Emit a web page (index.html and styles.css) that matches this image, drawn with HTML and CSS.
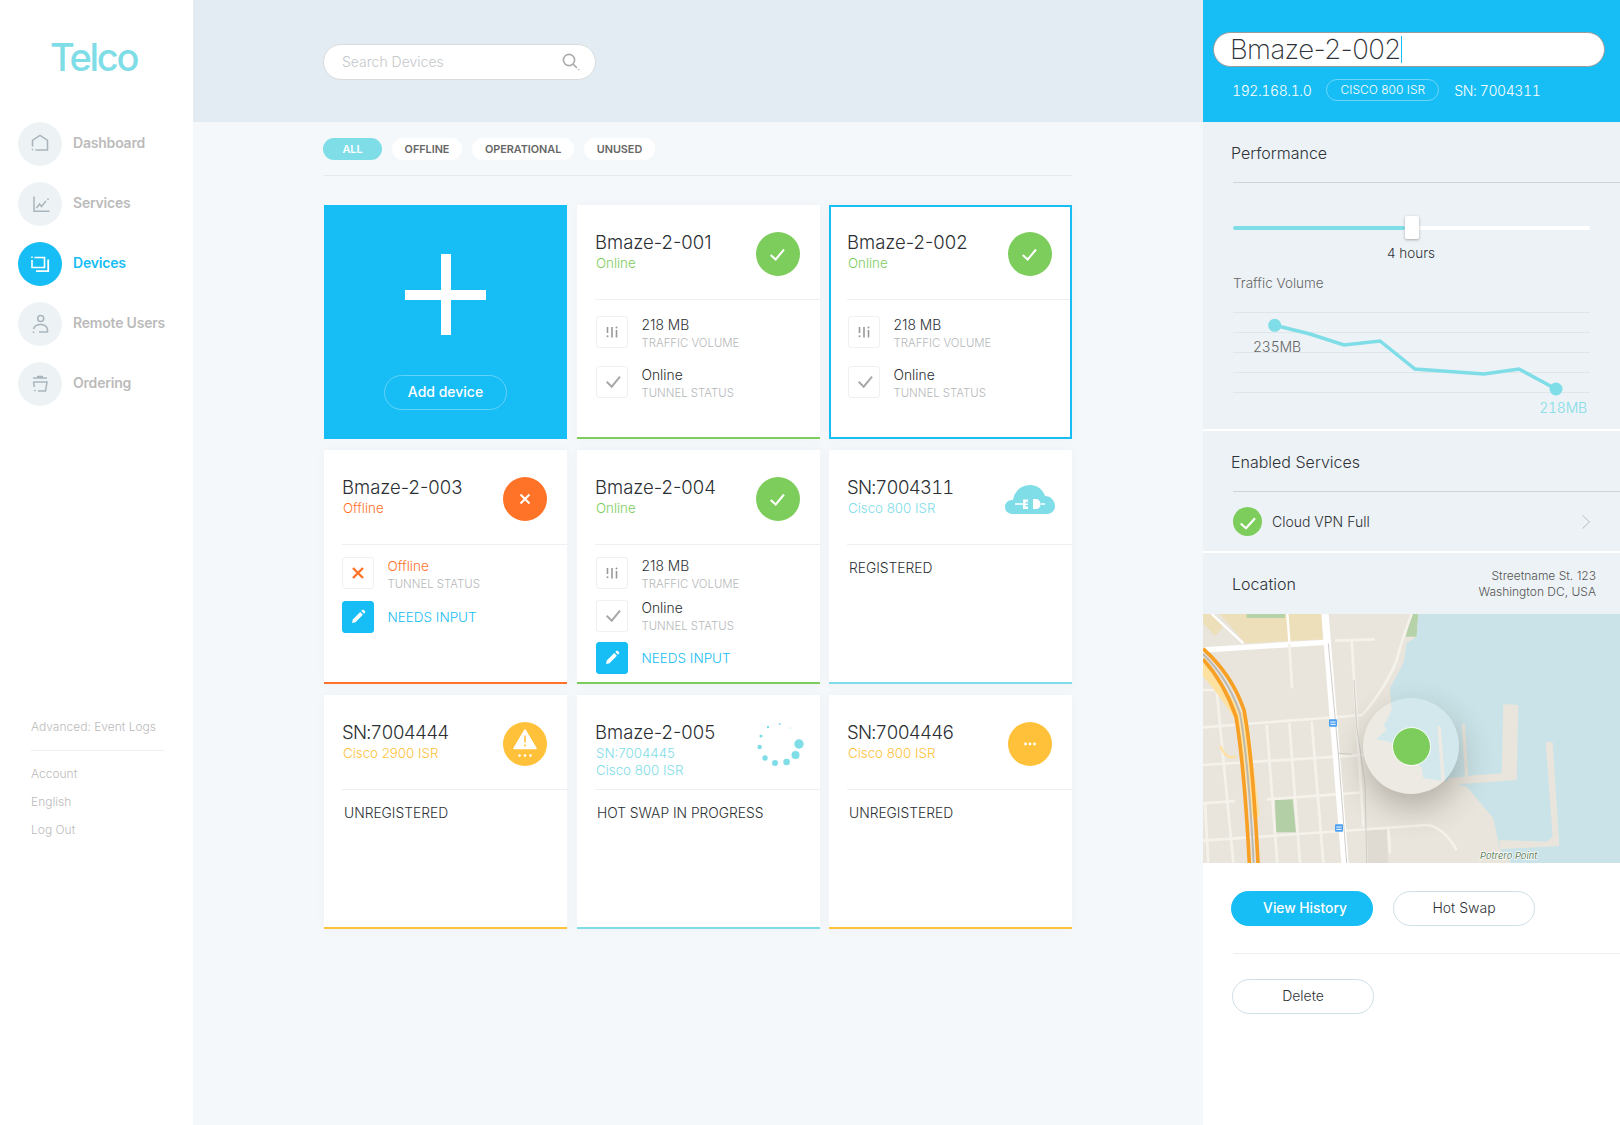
FILE: index.html
```html
<!DOCTYPE html>
<html lang="en">
<head>
<meta charset="utf-8">
<title>Telco Devices</title>
<link rel="stylesheet" href="styles.css">
</head>
<body>
<svg class="sprite" aria-hidden="true">
  <defs>
    <symbol id="i-check" viewBox="0 0 44 44"><path d="M14.700 23L19.700 27.500L28 17.500" fill="none" stroke="#fff" stroke-width="2"/></symbol>
    <symbol id="i-x" viewBox="0 0 44 44"><path d="M17.500 17.500L26.500 26.500M26.500 17.500L17.500 26.500" fill="none" stroke="#fff" stroke-width="2"/></symbol>
    <symbol id="i-bars" viewBox="0 0 32 32"><path d="M11.500 11v6M16 11v10.500M20.500 14v7.500" fill="none" stroke="#999" stroke-width="1.600"/><circle cx="11.500" cy="20.300" r="1" fill="#999"/><circle cx="20.500" cy="11.500" r="1" fill="#999"/></symbol>
    <symbol id="i-tick" viewBox="0 0 32 32"><path d="M10.700 15.700L15.700 20.700L24 10.700" fill="none" stroke="#a8a8a8" stroke-width="2"/></symbol>
    <symbol id="i-cross" viewBox="0 0 32 32"><path d="M11 11L21 21M21 11L11 21" fill="none" stroke="#ff7328" stroke-width="2.400"/></symbol>
    <symbol id="i-pencil" viewBox="0 0 32 32"><path d="M10 22L10.800 18.500L18.200 11.100L20.900 13.800L13.500 21.200Z" fill="#fff"/><path d="M19.300 10L20.200 9.100C20.700 8.600 21.400 8.600 21.900 9.100L22.900 10.100C23.400 10.600 23.400 11.300 22.900 11.800L22 12.700Z" fill="#fff"/></symbol>
  </defs>
</svg>
<div class="app">
  <aside class="sidebar">
    <div class="logo">Telco</div>
    <nav class="nav">
      <a class="nav-item"><span class="nav-icon"><svg width="20" height="20" viewBox="0 0 20 20" fill="none" stroke="#a9b5bd" stroke-width="1.500"><path d="M2.500 12.500V6.500L10 1.500L17.500 6.500V16H5.500"/><path d="M2.500 14.800V16.300"/></svg></span><span class="nav-text">Dashboard</span></a>
      <a class="nav-item"><span class="nav-icon"><svg width="20" height="20" viewBox="0 0 20 20" fill="none" stroke="#a9b5bd" stroke-width="1.500"><path d="M4 2.500V17.200H19.500"/><path d="M6.500 14L9.500 10L11.500 12.500L16 7"/><path d="M18 4.500V6"/></svg></span><span class="nav-text">Services</span></a>
      <a class="nav-item nav-item-active"><span class="nav-icon"><svg width="20" height="20" viewBox="0 0 20 20" fill="none" stroke="#fff" stroke-width="1.600"><path d="M4.500 3.500H14.500V13.500H2V6"/><path d="M2 2.500V4"/><path d="M6 17.200H18.200V5.500" stroke-width="1.800"/></svg></span><span class="nav-text">Devices</span></a>
      <a class="nav-item"><span class="nav-icon"><svg width="20" height="20" viewBox="0 0 20 20" fill="none" stroke="#a9b5bd" stroke-width="1.500"><circle cx="10.700" cy="4.500" r="3"/><path d="M3.500 15C4.500 12 7.500 10.500 10.500 10.500S16.500 12 17.500 15V18H9"/><path d="M3.500 17.500V19"/></svg></span><span class="nav-text">Remote Users</span></a>
      <a class="nav-item"><span class="nav-icon"><svg width="20" height="20" viewBox="0 0 20 20" fill="none" stroke="#a9b5bd" stroke-width="1.500"><path d="M3 4H17M7 2.500H13"/><path d="M3.500 8H17L15.500 17H8"/><path d="M3.500 8L4.300 13"/><path d="M5 15.800V17.300"/></svg></span><span class="nav-text">Ordering</span></a>
    </nav>
    <div class="side-foot">
      <div class="side-link side-adv">Advanced: Event Logs</div>
      <div class="side-link">Account</div>
      <div class="side-link">English</div>
      <div class="side-link">Log Out</div>
    </div>
  </aside>

  <main class="main">
    <header class="topbar">
      <div class="search">
        <span class="search-text">Search Devices</span>
        <svg width="18" height="18" viewBox="0 0 18 18" fill="none" stroke="#aaa" stroke-width="1.600"><circle cx="7" cy="7" r="5.600"/><path d="M11.200 11.200L15 15"/><path d="M16.300 16.300L17 17"/></svg>
      </div>
    </header>
    <section class="content">
      <div class="filters">
        <span class="pill pill-on">ALL</span>
        <span class="pill">OFFLINE</span>
        <span class="pill">OPERATIONAL</span>
        <span class="pill">UNUSED</span>
      </div>
      <div class="grid">
        <div class="add-card">
          <div class="plus"></div>
          <div class="add-btn">Add device</div>
        </div>

        <article class="card card-green">
          <div class="card-head">
            <div class="head-text"><div class="title">Bmaze-2-001</div><div class="sub c-green">Online</div></div>
            <div class="status bg-green"><svg width="44" height="44"><use href="#i-check"/></svg></div>
          </div>
          <div class="rows">
            <div class="row"><div class="box"><svg width="32" height="32"><use href="#i-bars"/></svg></div><div><div class="val">218 MB</div><div class="lab">TRAFFIC VOLUME</div></div></div>
            <div class="row"><div class="box"><svg width="32" height="32"><use href="#i-tick"/></svg></div><div><div class="val">Online</div><div class="lab">TUNNEL STATUS</div></div></div>
          </div>
        </article>

        <article class="card card-green card-selected">
          <div class="card-head">
            <div class="head-text"><div class="title">Bmaze-2-002</div><div class="sub c-green">Online</div></div>
            <div class="status bg-green"><svg width="44" height="44"><use href="#i-check"/></svg></div>
          </div>
          <div class="rows">
            <div class="row"><div class="box"><svg width="32" height="32"><use href="#i-bars"/></svg></div><div><div class="val">218 MB</div><div class="lab">TRAFFIC VOLUME</div></div></div>
            <div class="row"><div class="box"><svg width="32" height="32"><use href="#i-tick"/></svg></div><div><div class="val">Online</div><div class="lab">TUNNEL STATUS</div></div></div>
          </div>
        </article>

        <article class="card card-orange">
          <div class="card-head">
            <div class="head-text"><div class="title">Bmaze-2-003</div><div class="sub c-orange">Offline</div></div>
            <div class="status bg-orange"><svg width="44" height="44"><use href="#i-x"/></svg></div>
          </div>
          <div class="rows rows-b">
            <div class="row"><div class="box"><svg width="32" height="32"><use href="#i-cross"/></svg></div><div><div class="val val-orange">Offline</div><div class="lab">TUNNEL STATUS</div></div></div>
            <div class="row"><div class="box box-blue"><svg width="32" height="32"><use href="#i-pencil"/></svg></div><div class="needs">NEEDS INPUT</div></div>
          </div>
        </article>

        <article class="card card-green">
          <div class="card-head">
            <div class="head-text"><div class="title">Bmaze-2-004</div><div class="sub c-green">Online</div></div>
            <div class="status bg-green"><svg width="44" height="44"><use href="#i-check"/></svg></div>
          </div>
          <div class="rows rows-c">
            <div class="row"><div class="box"><svg width="32" height="32"><use href="#i-bars"/></svg></div><div><div class="val">218 MB</div><div class="lab">TRAFFIC VOLUME</div></div></div>
            <div class="row"><div class="box"><svg width="32" height="32"><use href="#i-tick"/></svg></div><div><div class="val">Online</div><div class="lab">TUNNEL STATUS</div></div></div>
            <div class="row"><div class="box box-blue"><svg width="32" height="32"><use href="#i-pencil"/></svg></div><div class="needs">NEEDS INPUT</div></div>
          </div>
        </article>

        <article class="card card-teal">
          <div class="card-head">
            <div class="head-text"><div class="title title-sn">SN:7004311</div><div class="sub c-teal">Cisco 800 ISR</div></div>
            <div class="status">
              <svg width="50" height="29" viewBox="0 0 50 29"><path d="M8 29C3 29 0 26 0 22C0 17.500 3.500 14.500 8 15C9 7 16 0 25 0C33 0 38 5 40 11C46 11 50 16 50 21C50 26 46 29 42 29Z" fill="#7fdde8"/><g fill="#fff"><path d="M10 19H19M40 19H36" stroke="#fff" stroke-width="1.500"/><path d="M18 14.500H23V17H20.500V18.500H23V20H20.500V21.500H23V24H18Z"/><path d="M28 14H31C33.500 14 35.500 16 35.500 19S33.500 24 31 24H28Z"/></g></svg>
            </div>
          </div>
          <div class="state">REGISTERED</div>
        </article>

        <article class="card card-amber">
          <div class="card-head">
            <div class="head-text"><div class="title title-sn">SN:7004444</div><div class="sub c-amber">Cisco 2900 ISR</div></div>
            <div class="status bg-amber"><svg width="44" height="44" viewBox="0 0 44 44"><path d="M22 8L33 26.500H11Z" fill="#fff" stroke="#fff" stroke-width="1.500" stroke-linejoin="round"/><path d="M22 13.500V20.500M22 22.500V24.500" stroke="#ffc13a" stroke-width="1.600"/><circle cx="16.500" cy="33.500" r="1.300" fill="#fff"/><circle cx="22" cy="33.500" r="1.300" fill="#fff"/><circle cx="27.500" cy="33.500" r="1.300" fill="#fff"/></svg></div>
          </div>
          <div class="state">UNREGISTERED</div>
        </article>

        <article class="card card-teal">
          <div class="card-head">
            <div class="head-text"><div class="title">Bmaze-2-005</div><div class="sub sub-tight c-teal">SN:7004445<br>Cisco 800 ISR</div></div>
            <div class="status status-spin"><svg width="48" height="44" viewBox="0 0 48 44" fill="#7fdde8"><circle cx="43" cy="22" r="4.700"/><circle cx="39.500" cy="33" r="4"/><circle cx="30.600" cy="40" r="3.300"/><circle cx="19" cy="41" r="3"/><circle cx="9" cy="36" r="2.700"/><circle cx="3.600" cy="25" r="2.200"/><circle cx="5" cy="14" r="1.600"/><circle cx="12" cy="5" r="1.200"/><circle cx="23.700" cy="2" r="1"/><circle cx="34.500" cy="6" r=".6"/></svg></div>
          </div>
          <div class="state">HOT SWAP IN PROGRESS</div>
        </article>

        <article class="card card-amber">
          <div class="card-head">
            <div class="head-text"><div class="title title-sn">SN:7004446</div><div class="sub c-amber">Cisco 800 ISR</div></div>
            <div class="status bg-amber"><svg width="44" height="44" viewBox="0 0 44 44" fill="#fff"><circle cx="17.500" cy="22" r="1.400"/><circle cx="22" cy="22" r="1.400"/><circle cx="26.500" cy="22" r="1.400"/></svg></div>
          </div>
          <div class="state">UNREGISTERED</div>
        </article>
      </div>
    </section>
  </main>

  <aside class="detail">
    <header class="detail-top">
      <div class="name-input"><span class="name-text">Bmaze-2-002</span></div>
      <div class="meta">
        <span class="meta-num">192.168.1.0</span>
        <span class="meta-pill">CISCO 800 ISR</span>
        <span class="meta-num">SN: 7004311</span>
      </div>
    </header>

    <section class="panel panel-perf">
      <div class="panel-head"><h2 class="panel-title">Performance</h2></div>
      <div class="slider">
        <div class="track"><div class="track-fill"></div></div>
        <div class="thumb"></div>
      </div>
      <div class="slider-label">4 hours</div>
      <div class="traffic-label">Traffic Volume</div>
      <svg class="chart" width="357" height="129" viewBox="0 0 357 129">
        <g stroke="#dfe6ea" stroke-width="1"><path d="M0 12.500H357M0 32.500H357M0 52.500H357M0 72.500H357M0 92.500H357"/></g>
        <polyline points="41.700,25.300 77,34 111,45 147,41 182,69 251,74 286,69 323,89" fill="none" stroke="#7fdde8" stroke-width="3.500"/>
        <circle cx="41.700" cy="25.300" r="6.500" fill="#7fdde8"/>
        <circle cx="323" cy="89" r="6.500" fill="#7fdde8"/>
        <text class="chart-text" x="20" y="52" fill="#666">235MB</text>
        <text class="chart-text" x="354" y="113" fill="#7fdde8" text-anchor="end">218MB</text>
      </svg>
    </section>

    <section class="panel panel-services">
      <div class="panel-head"><h2 class="panel-title">Enabled Services</h2></div>
      <div class="service-row">
        <span class="service-check"><svg width="29" height="29" viewBox="0 0 29 29"><path d="M7.700 16.500L13 21.300L22 11.300" fill="none" stroke="#fff" stroke-width="2.200"/></svg></span>
        <span class="service-name">Cloud VPN Full</span>
        <svg class="chevron" width="8" height="14" viewBox="0 0 8 14" fill="none" stroke="#bbb" stroke-width="1"><path d="M.5 .5L7.500 7L.5 13.500"/></svg>
      </div>
    </section>

    <section class="panel panel-location">
      <h2 class="panel-title">Location</h2>
      <div class="address">Streetname St. 123<br>Washington DC, USA</div>
    </section>

    <div class="map">
      <svg class="map-svg" width="417" height="249" viewBox="9 12 1251 747">
        <rect x="9" y="12" width="1251" height="747" fill="#e9e5dc"/>
        <path d="M60 12H365L368 88L135 100ZM9 12H35L70 50L45 78L9 40Z" fill="#eddfb9"/>
        <path d="M140 12H255V24H140ZM635 12H655L650 80H617Z" fill="#b5d2a8"/>
        <path d="M655 12L650 80L620 100L610 160L570 235L575 300L552 345L560 360L528 388L570 395L610 440L665 470L670 505L745 515L800 530L880 625L900 720L930 745V759H1260V12Z" fill="#c9e3e8"/>
        <g fill="#e9e5dc">
          <path d="M910 282L955 285L950 510L745 525V505L830 495L905 490Z"/>
          <path d="M785 342H795L805 500H795Z"/>
          <path d="M712 348H722L735 515H725Z"/>
          <path d="M1037 397L1058 395L1078 708L900 718L898 690L1040 695L1058 680Z"/>
        </g>
        <path d="M500 660H560L565 759H505Z" fill="#dfdbd3"/>
        <path d="M225 570L278 568L288 667H228Z" fill="#b3cfa6"/>
        <g fill="none" stroke="#f5f2ec" stroke-width="8">
          <path d="M405 92L525 88M455 92L490 650M635 12Q605 90 590 150Q565 220 490 312"/>
          <path d="M9 352L490 315M9 465L490 435M200 568L490 547M9 580L105 573"/>
          <path d="M9 692L680 645Q730 650 770 720"/>
          <path d="M9 240H50L100 759M200 345L232 759M268 340L300 759M335 335L370 759M565 655L570 730M15 580L25 759"/>
        </g>
        <g fill="none" stroke="#fff">
          <path d="M9 120L375 97" stroke-width="16"/>
          <path d="M35 12L130 100M262 12L268 95" stroke-width="7"/>
          <path d="M268 100L276 235" stroke="#f5f2ec" stroke-width="8"/>
          <path d="M375 12L435 759" stroke-width="22"/>
        </g>
        <path d="M385 100L415 430L440 759M462 210L470 350L495 520L500 759M415 430L455 433" fill="none" stroke="#cfcdc8" stroke-width="3"/>
        <g fill="none" stroke-linecap="round">
          <path d="M9 175Q80 260 130 340L165 610" stroke="#fde1a0" stroke-width="28"/>
          <path d="M62 410Q80 450 105 440" stroke="#fde1a0" stroke-width="7"/>
        </g>
        <g fill="none">
          <path d="M9 116Q95 193 132 300Q157 430 174 759" stroke="#f7a025" stroke-width="11"/>
          <path d="M9 148Q72 217 108 320Q133 470 148 759" stroke="#f7a025" stroke-width="11"/>
          <path d="M9 132Q84 205 120 310Q145 450 161 759" stroke="#bdb9b0" stroke-width="6"/>
        </g>
        <g>
          <rect x="387" y="328" width="24" height="22" rx="3" fill="#4a9ff0"/>
          <rect x="405" y="643" width="24" height="22" rx="3" fill="#4a9ff0"/>
          <path d="M391 336H407M391 343H407M409 651H425M409 658H425" stroke="#fff" stroke-width="3"/>
        </g>
        <text class="map-label" x="840" y="748">Potrero Point</text>
      </svg>
      <div class="pin"><div class="pin-dot"></div></div>
    </div>

    <section class="actions">
      <div class="btn-row">
        <span class="btn btn-primary">View History</span>
        <span class="btn">Hot Swap</span>
      </div>
      <div class="actions-rule"></div>
      <span class="btn btn-delete">Delete</span>
    </section>
  </aside>
</div>
</body>
</html>
```
FILE: styles.css
```css
* { box-sizing: border-box; }
html, body { margin: 0; padding: 0; }
body { font-family: Inter, "Liberation Sans", sans-serif; color: #2f3338; background: #fff; }
.sprite { position: absolute; width: 0; height: 0; }
.app { display: flex; width: 1620px; height: 1125px; overflow: hidden; }

/* sidebar */
.sidebar { width: 193px; flex: none; background: #fff; }
.logo { height: 122px; padding: 34px 0 0 50px; font-size: 38px; line-height: 46px; font-weight: 500; letter-spacing: -2.300px; color: #7fdde8; }
.nav { display: flex; flex-direction: column; gap: 16px; padding-left: 18px; }
.nav-item { display: flex; align-items: center; gap: 11px; height: 44px; font-size: 14px; font-weight: 600; letter-spacing: -.2px; color: #bbb; }
.nav-text { padding-bottom: 3px; }
.nav-icon { width: 44px; height: 44px; border-radius: 50%; background: #edf2f5; display: flex; align-items: center; justify-content: center; flex: none; }
.nav-item-active { color: #17bdf5; }
.nav-item-active .nav-icon { background: #17bdf5; }
.side-foot { margin-top: 312px; margin-left: 31px; width: 133px; }
.side-link { font-size: 12px; line-height: 18px; color: #bbb; margin-bottom: 10px; font-weight: 300; }
.side-adv { margin-bottom: 14px; padding-bottom: 14px; border-bottom: 1px solid #eaf0f4; }

/* main */
.main { width: 1010px; flex: none; background: #f4f8fb; }
.topbar { height: 122px; background: #e2ecf2; padding: 44px 0 0 130px; }
.search { width: 273px; height: 36px; background: #fff; border: 1px solid #d8dcdf; border-radius: 18px; display: flex; align-items: center; justify-content: space-between; padding: 0 15px 0 18px; }
.search-text { font-size: 14px; font-weight: 300; color: #c4c8cb; padding-bottom: 1px; }
.content { padding-left: 131px; width: 879px; }
.filters { display: flex; gap: 9.500px; margin-top: 16px; padding-bottom: 15px; border-bottom: 1px solid #e4e9ec; }
.pill { height: 22px; line-height: 23px; padding: 0 13px; border-radius: 11px; background: #fff; font-size: 10.800px; font-weight: 600; color: #666; }
.pill-on { background: #7fdde8; color: #fff; padding: 0 19.500px; margin-left: -1px; }
.grid { display: grid; grid-template-columns: 253px 252px 243px; grid-auto-rows: 234px; row-gap: 11px; margin-top: 29px; }

/* cards */
.add-card { width: 243px; background: #17bdf5; display: flex; flex-direction: column; align-items: center; }
.plus { width: 81px; height: 81px; margin-top: 49px; background: linear-gradient(#fff, #fff) center / 10px 81px no-repeat, linear-gradient(#fff, #fff) center / 81px 10px no-repeat; }
.add-btn { margin-top: 40px; width: 123px; height: 35px; line-height: 32px; text-align: center; border: 1px solid #63d3f8; border-radius: 18px; color: #fff; font-size: 14px; font-weight: 500; }
.card { width: 243px; background: #fff; border-bottom: 2px solid #7dcd5c; display: flex; flex-direction: column; box-shadow: 0 0 10px rgba(40,70,90,.03); }
.card-green { border-bottom-color: #7dcd5c; }
.card-orange { border-bottom-color: #ff7328; }
.card-teal { border-bottom-color: #7fdde8; }
.card-amber { border-bottom-color: #ffc13a; }
.card-selected { outline: 2px solid #17bdf5; outline-offset: -2px; border-bottom-color: #17bdf5; }
.card-head { height: 95px; margin-left: 18px; padding: 0 20px 0 0; border-bottom: 1px solid #edf0f2; display: flex; justify-content: space-between; flex: none; }
.head-text { padding-top: 25px; }
.title { font-size: 18.500px; line-height: 24px; font-weight: 300; color: #2b2f33; }
.title-sn { font-variant-numeric: tabular-nums; letter-spacing: -.8px; }
.sub { font-size: 13.300px; line-height: 18px; font-weight: 300; margin-left: 1px; }
.sub-tight { line-height: 17px; margin-top: 1px; }
.status { width: 44px; height: 44px; margin-top: 27px; border-radius: 50%; display: flex; align-items: center; justify-content: center; flex: none; }
.status svg { flex: none; display: block; }
.status-spin { justify-content: flex-start; }
.bg-green { background: #7dcd5c; }
.bg-orange { background: #ff7328; }
.bg-amber { background: #ffc13a; }
.c-green { color: #7dcd5c; }
.c-orange { color: #ff7328; }
.c-teal { color: #7fdde8; }
.c-amber { color: #ffc13a; }
.rows { display: flex; flex-direction: column; gap: 18px; padding: 16px 0 0 19px; }
.rows-b { gap: 12px; padding: 12px 0 0 18px; }
.rows-c { gap: 10.500px; padding-top: 12px; }
.row { display: flex; align-items: center; gap: 13.500px; height: 32px; }
.box { width: 32px; height: 32px; border: 1px solid #eef1f3; border-radius: 3px; flex: none; }
.box svg { display: block; margin: -1px; }
.box-blue { background: #17bdf5; border-color: #17bdf5; }
.val { font-size: 13.800px; line-height: 17px; margin-top: 3px; font-weight: 300; color: #2b2f33; }
.val-orange { color: #ff7328; font-size: 13.500px; }
.lab { font-size: 11.400px; line-height: 16px; margin-top: 1px; font-weight: 300; color: #b5b8ba; }
.needs { font-size: 13.500px; font-weight: 300; color: #17bdf5; padding-bottom: 1px; }
.state { padding: 13px 0 0 20px; font-size: 13.800px; line-height: 20px; font-weight: 300; color: #2b2f33; }

/* detail */
.detail { width: 417px; flex: none; background: #fff; }
.detail-top { height: 122px; background: #17bdf5; padding: 32px 15px 0 10px; }
.name-input { height: 35px; background: #fff; border: 1px solid #9a9a9a; border-radius: 18px; padding-left: 16px; display: flex; align-items: center; }
.name-text { font-size: 27.500px; line-height: 27px; font-weight: 200; letter-spacing: -.6px; color: #2f3338; border-right: 1px solid #17bdf5; }
.meta { display: flex; align-items: center; gap: 15px; margin: 12px 0 0 19px; font-size: 14px; font-weight: 300; color: #fff; }
.meta-num { font-variant-numeric: tabular-nums; letter-spacing: -.4px; }
.meta-pill { height: 22px; line-height: 20px; width: 113px; text-align: center; border: 1px solid #6ad6f9; border-radius: 11px; font-size: 12px; }
.panel { background: #edf2f6; }
.panel-perf { height: 307px; margin-bottom: 2px; }
.panel-services { height: 120px; margin-bottom: 2px; }
.panel-head { height: 61px; margin-left: 30px; padding-top: 21px; border-bottom: 1px solid #ced5d9; }
.panel-title { margin: 0 0 0 -2px; font-size: 16px; line-height: 20px; font-weight: 300; color: #2f3338; }
.slider { position: relative; height: 23px; width: 357px; margin: 33px 0 0 30px; }
.track { position: absolute; left: 0; right: 0; top: 10px; height: 4px; border-radius: 2px; background: #fff; }
.track-fill { width: 172px; height: 4px; border-radius: 2px; background: #7fdde8; }
.thumb { position: absolute; left: 172px; top: 0; width: 14px; height: 23px; border-radius: 2px; background: #fff; box-shadow: 0 1px 3px rgba(0,0,0,.3); }
.slider-label { width: 356px; margin: 5px 0 0 30px; text-align: center; font-size: 13.500px; line-height: 18px; font-weight: 300; }
.traffic-label { margin: 12px 0 0 30px; font-size: 13.500px; line-height: 18px; font-weight: 300; color: #666; }
.chart { display: block; margin: 8px 0 0 30px; }
.chart-text { font-size: 14px; font-weight: 300; font-variant-numeric: tabular-nums; letter-spacing: -.2px; }
.service-row { display: flex; align-items: center; margin: 15px 0 0 30px; width: 357px; }
.service-check { width: 29px; height: 29px; border-radius: 50%; background: #7dcd5c; flex: none; display: block; }
.service-check svg { display: block; }
.service-name { margin-left: 10px; font-size: 14px; font-weight: 300; flex: 1; }
.chevron { flex: none; }
.panel-location { height: 61px; display: flex; align-items: center; justify-content: space-between; padding: 0 24px 0 31px; }
.address { text-align: right; font-size: 12px; line-height: 16px; font-weight: 300; color: #555; }
.map { position: relative; height: 249px; overflow: hidden; }
.map-svg { display: block; }
.map-label { font-size: 28px; font-style: italic; font-weight: 400; fill: #5f7f5f; stroke: #fff; stroke-width: 4px; paint-order: stroke; }
.pin { position: absolute; left: 160px; top: 84px; width: 96px; height: 96px; border-radius: 50%; background: rgba(255,255,255,.2); box-shadow: 2px 14px 32px rgba(60,50,40,.3); display: flex; align-items: center; justify-content: center; }
.pin-dot { width: 39px; height: 39px; border-radius: 50%; background: #7dcd5c; border: 1.500px solid #fff; }
.actions { padding: 28px 0 0 28px; }
.btn-row { display: flex; gap: 20px; }
.btn { display: block; width: 142px; height: 35px; line-height: 32px; text-align: center; border: 1px solid #cfdfe7; border-radius: 18px; font-size: 14px; font-weight: 300; background: #fff; color: #2f3338; }
.btn-primary { background: #17bdf5; border-color: #17bdf5; color: #fff; font-weight: 500; font-size: 13.800px; padding-left: 6px; }
.actions-rule { height: 1px; background: #edf0f2; margin: 27px 0 25px 2px; }
.btn-delete { margin-left: 1px; }
```
